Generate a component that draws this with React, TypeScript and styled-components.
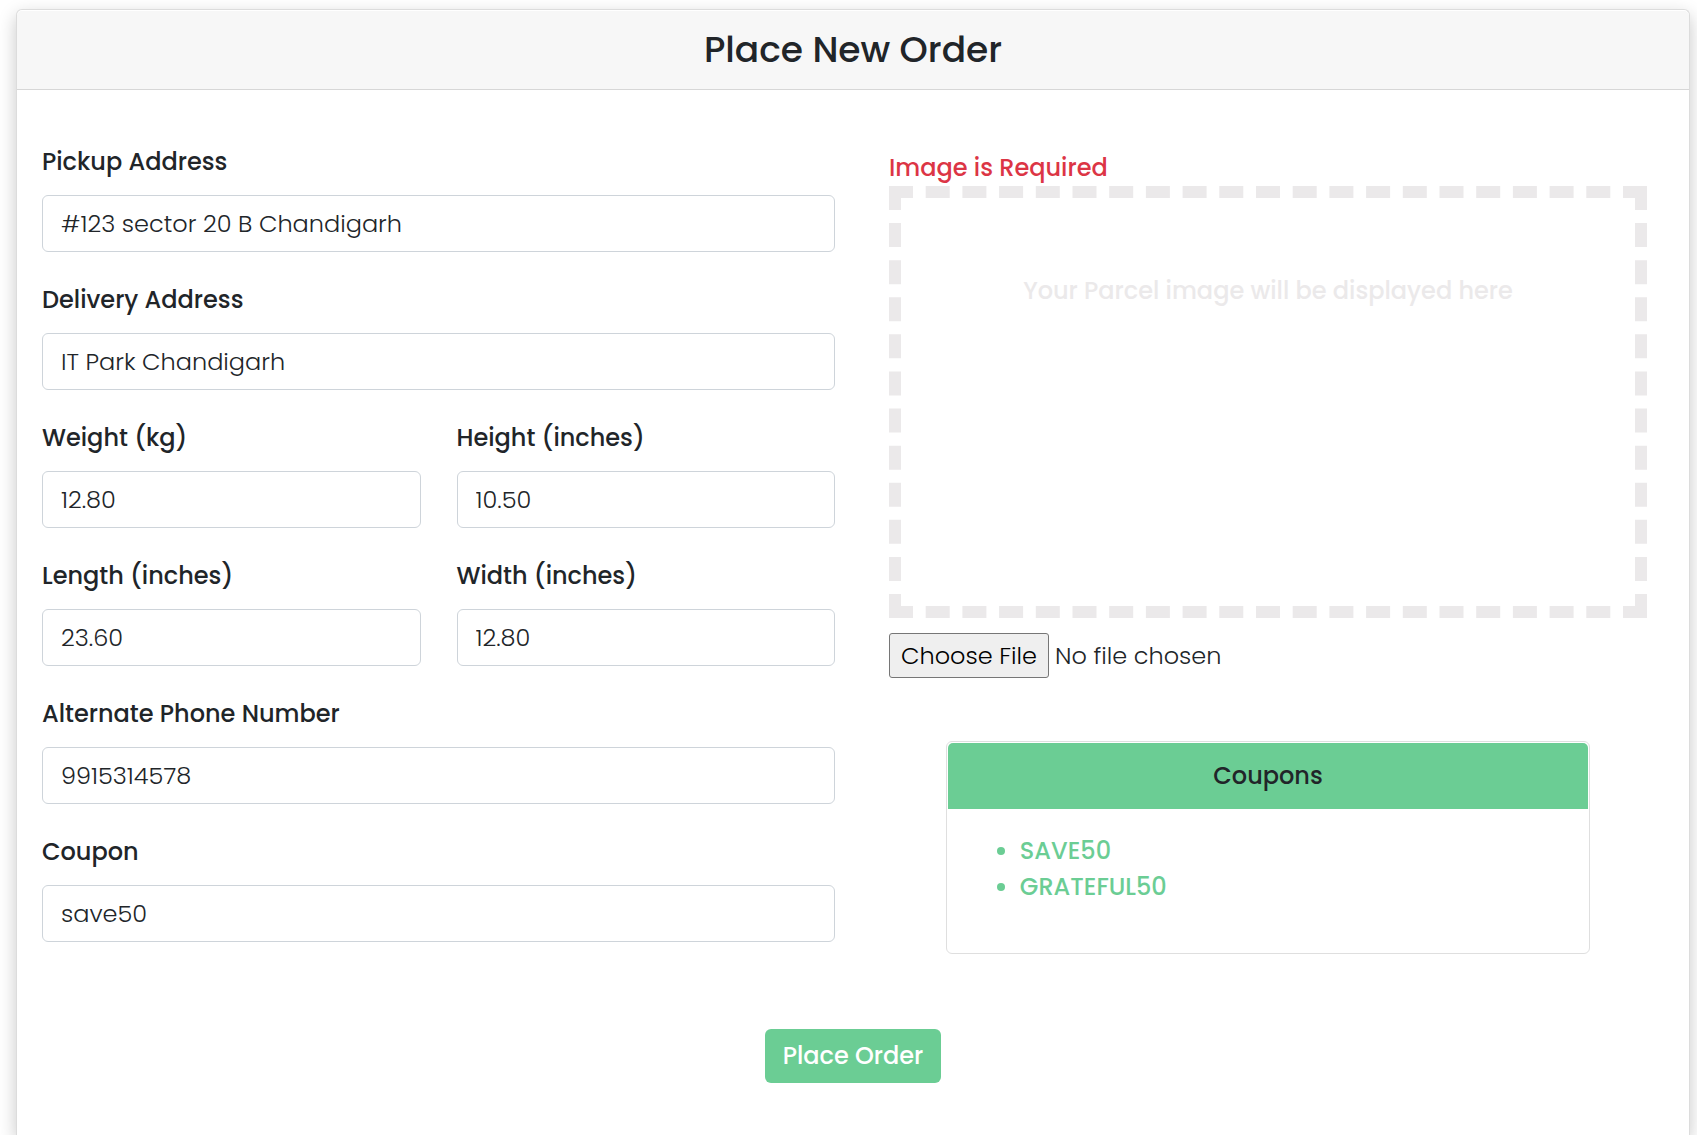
import React, { useState } from "react";
import styled, { createGlobalStyle } from "styled-components";

const GlobalStyle = createGlobalStyle`
  *, *::before, *::after { box-sizing: border-box; }
  body {
    margin: 0;
    background: #fff;
    color: #212529;
    font-family: Poppins, Inter, "Open Sans", sans-serif;
    font-size: 24px;
    line-height: 36px;
  }
  input, button { font: inherit; }
`;

const Page = styled.div`
  display: flex;
  flex-direction: column;
  min-height: 100vh;
  padding: 9px 7px 0 16px;
`;

const OrderCard = styled.main`
  flex: 1;
  padding-top: 1px;
  border: 1px solid #dcdcdc;
  border-bottom: 0;
  border-radius: 6px 6px 0 0;
  background: #fff;
  box-shadow: 0 6px 18px rgba(0, 0, 0, 0.22);
`;

const CardHeader = styled.header`
  padding: 17px 24px 18px;
  border-bottom: 1px solid #d7d7d7;
  border-radius: 5px 5px 0 0;
  background: #f7f7f7;
  text-align: center;
`;

const Title = styled.h1`
  margin: 0;
  font-size: 36px;
  font-weight: 500;
  line-height: 43px;
`;

const OrderForm = styled.form`
  display: flex;
  flex-direction: column;
  align-items: center;
  gap: 75px;
  padding: 54px 0 51px;
`;

const Columns = styled.div`
  display: grid;
  grid-template-columns: 1fr 1fr;
  width: 100%;
`;

const Fields = styled.div`
  display: grid;
  grid-template-columns: 1fr 1fr;
  align-content: start;
  gap: 30px 36px;
  padding: 0 18px 0 25px;
`;

const FieldBox = styled.div<{ $wide?: boolean }>`
  display: flex;
  flex-direction: column;
  gap: 15px;
  min-width: 0;
  grid-column: ${({ $wide }) => ($wide ? "1 / -1" : "auto")};
`;

const Label = styled.label`
  font-weight: 500;
`;

const TextInput = styled.input`
  width: 100%;
  height: 57px;
  padding: 9px 18px;
  border: 1px solid #ced4da;
  border-radius: 6px;
  background: #fff;
  color: #212529;
  font-weight: 300;
`;

const Side = styled.div`
  display: flex;
  flex-direction: column;
  padding: 6px 42px 0 36px;
`;

const ErrorText = styled.label`
  color: #dc3545;
  font-weight: 500;
`;

const Preview = styled.div`
  height: 432px;
  padding-top: 75px;
  border: 12px dashed #ebe9ea;
  color: #ebe9ea;
  font-weight: 500;
  text-align: center;
`;

const FileInput = styled.input`
  margin: 15px 0 63px;
  height: 45px;
  color: #212529;
  font-weight: 300;

  &::file-selector-button {
    height: 45px;
    margin: 0 6px 0 0;
    padding: 0 11px;
    border: 1px solid #767676;
    border-radius: 3px;
    background: #efefef;
    color: #000;
    font: inherit;
  }
`;

const CouponCard = styled.section`
  width: 85%;
  align-self: center;
  padding: 1px;
  border: 1px solid #dfdfdf;
  border-radius: 6px;
`;

const CouponTitle = styled.h2`
  margin: 0;
  padding: 15px;
  border-radius: 5px 5px 0 0;
  background: #6bcd94;
  font-size: 24px;
  font-weight: 500;
  line-height: 36px;
  text-align: center;
`;

const CouponList = styled.ul`
  margin: 0;
  padding: 24px 24px 47px 72px;
  color: #6bcd94;
  font-weight: 500;
`;

const SubmitButton = styled.button`
  padding: 9px 18px;
  border: 0;
  border-radius: 6px;
  background: #6bcd94;
  color: #fff;
  font-weight: 500;
  cursor: pointer;
`;

type Field = { id: string; label: string; value: string; wide?: boolean };

const FIELDS: Field[] = [
  { id: "pickup", label: "Pickup Address", value: "#123 sector 20 B Chandigarh", wide: true },
  { id: "delivery", label: "Delivery Address", value: "IT Park Chandigarh", wide: true },
  { id: "weight", label: "Weight (kg)", value: "12.80" },
  { id: "height", label: "Height (inches)", value: "10.50" },
  { id: "length", label: "Length (inches)", value: "23.60" },
  { id: "width", label: "Width (inches)", value: "12.80" },
  { id: "phone", label: "Alternate Phone Number", value: "9915314578", wide: true },
  { id: "coupon", label: "Coupon", value: "save50", wide: true },
];

const COUPONS = ["SAVE50", "GRATEFUL50"];

function FormField({ id, label, value, wide }: Field) {
  const [text, setText] = useState(value);
  return (
    <FieldBox $wide={wide}>
      <Label htmlFor={id}>{label}</Label>
      <TextInput id={id} type="text" value={text} onChange={(e) => setText(e.target.value)} />
    </FieldBox>
  );
}

export default function App() {
  return (
    <>
      <GlobalStyle />
      <Page>
        <OrderCard>
          <CardHeader>
            <Title>Place New Order</Title>
          </CardHeader>
          <OrderForm onSubmit={(e) => e.preventDefault()}>
            <Columns>
              <Fields>
                {FIELDS.map((field) => (
                  <FormField key={field.id} {...field} />
                ))}
              </Fields>
              <Side>
                <ErrorText htmlFor="parcel-image">Image is Required</ErrorText>
                <Preview>Your Parcel image will be displayed here</Preview>
                <FileInput id="parcel-image" type="file" accept="image/*" />
                <CouponCard>
                  <CouponTitle>Coupons</CouponTitle>
                  <CouponList>
                    {COUPONS.map((code) => (
                      <li key={code}>{code}</li>
                    ))}
                  </CouponList>
                </CouponCard>
              </Side>
            </Columns>
            <SubmitButton type="submit">Place Order</SubmitButton>
          </OrderForm>
        </OrderCard>
      </Page>
    </>
  );
}
